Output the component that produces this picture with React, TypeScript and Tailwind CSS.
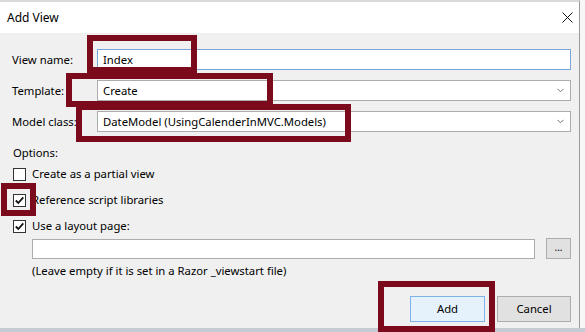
import React from "react";

const font = { fontFamily: '"Segoe UI", "Noto Sans", "Open Sans", sans-serif' };

function Chevron() {
  return (
    <svg width="7" height="5" viewBox="0 0 7 5" className="shrink-0">
      <path d="M0.5 0.8 L3.5 3.8 L6.5 0.8" fill="none" stroke="#707070" strokeWidth="1" />
    </svg>
  );
}

function Check({ checked }: { checked: boolean }) {
  return (
    <span className="w-[13px] h-[13px] border border-[#333] bg-white flex items-center justify-center shrink-0">
      {checked && (
        <svg width="11" height="11" viewBox="0 0 11 11">
          <path d="M1.8 5.5 L4.3 8 L9.3 2.4" fill="none" stroke="#111" strokeWidth="1.8" />
        </svg>
      )}
    </span>
  );
}

function Row({ label, children }: { label: string; children: React.ReactNode }) {
  return (
    <div className="flex items-center h-[21px]">
      <span className="w-[85px] shrink-0">{label}</span>
      {children}
    </div>
  );
}

function Combo({ value }: { value: string }) {
  return (
    <div className="flex-1 h-[21px] border border-[#acacac] bg-white flex items-center justify-between pl-[5px] pr-[6px]">
      <span>{value}</span>
      <Chevron />
    </div>
  );
}

function Opt({ label, checked }: { label: string; checked: boolean }) {
  return (
    <div className="flex items-center h-[16px] ml-[1px] gap-[6px]">
      <Check checked={checked} />
      <span>{label}</span>
    </div>
  );
}

export default function App() {
  return (
    <div className="relative w-[585px] h-[332px] overflow-hidden bg-[#f7f7f7] text-[11.3px] text-black leading-[16px]" style={font}>
      <div className="w-[580px] h-[328px] flex flex-col border-r border-[#9a9a9a] border-t-2 border-t-[#d9d9d9]">
        {/* title bar */}
        <div className="h-[31px] bg-white flex items-center justify-between pl-[7px] pr-[6px]">
          <span className="text-[12px] pt-[1px]">Add View</span>
          <svg width="11" height="11" viewBox="0 0 11 11">
            <path d="M0.5 0.5 L10.5 10.5 M10.5 0.5 L0.5 10.5" stroke="#111" strokeWidth="1" />
          </svg>
        </div>

        <div className="flex-1 bg-[#f0f0f0] flex flex-col pl-[12px] pr-[8px] pt-[16px]">
          <Row label="View name:">
            <div className="flex-1 h-[21px] border border-[#7aa7d8] bg-white flex items-center pl-[5px]">Index</div>
          </Row>
          <div className="mt-[10px]">
            <Row label="Template:">
              <Combo value="Create" />
            </Row>
          </div>
          <div className="mt-[10px]">
            <Row label="Model class:">
              <Combo value="DateModel (UsingCalenderInMVC.Models)" />
            </Row>
          </div>

          <div className="mt-[13px] ml-[1px]">Options:</div>
          <div className="mt-[5px] flex flex-col gap-[10px]">
            <Opt label="Create as a partial view" checked={false} />
            <Opt label="Reference script libraries" checked={true} />
            <Opt label="Use a layout page:" checked={true} />
          </div>

          <div className="mt-[4px] ml-[20px] flex items-center h-[21px] gap-[11px]">
            <div className="flex-1 h-[20px] border border-[#acacac] bg-white" />
            <div className="w-[25px] h-[21px] border border-[#adadad] bg-[#e1e1e1] flex items-center justify-center text-[10px] leading-none pb-[3px]">...</div>
          </div>
          <div className="mt-[4px] ml-[20px]">(Leave empty if it is set in a Razor _viewstart file)</div>

          <div className="mt-[17px] flex justify-end gap-[12px]">
            <div className="w-[75px] h-[26px] border border-[#7eb4ea] bg-[#e5f1fb] flex items-center justify-center">Add</div>
            <div className="w-[74px] h-[26px] border border-[#adadad] bg-[#e1e1e1] flex items-center justify-center">Cancel</div>
          </div>
        </div>
      </div>
      <div className="absolute left-0 right-0 bottom-0 h-[4px] bg-[#c6cad2]" />

      {/* annotation boxes */}
      <div className="absolute left-[87px] top-[35px] w-[110px] h-[38px] border-[6px] border-[#7b0a1c]" />
      <div className="absolute left-[66px] top-[73px] w-[207px] h-[34px] border-[6px] border-[#7b0a1c]" />
      <div className="absolute left-[76px] top-[104px] w-[275px] h-[38px] border-[6px] border-[#7b0a1c]" />
      <div className="absolute left-[1px] top-[183px] w-[35px] h-[33px] border-[6px] border-[#7b0a1c]" />
      <div className="absolute left-[378px] top-[281px] w-[117px] h-[51px] border-[6px] border-[#7b0a1c]" />
    </div>
  );
}
